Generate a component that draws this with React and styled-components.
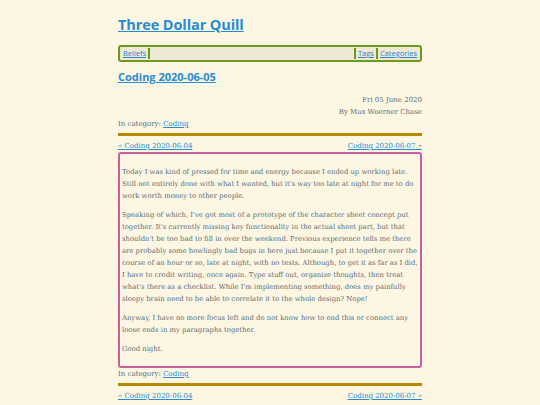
import React from 'react';
import styled, { createGlobalStyle } from 'styled-components';

const GlobalStyle = createGlobalStyle`
  html, body {
    margin: 0;
    padding: 0;
    background: #fdf6e3;
  }
  body {
    font-family: "DejaVu Serif", serif;
    color: #586e75;
  }
`;

const Page = styled.div`
  width: 304px;
  margin: 0 auto;
  padding-top: 14px;
`;

const SiteTitle = styled.h1`
  margin: 0;
  font-family: "Open Sans", "Noto Sans", sans-serif;
  font-weight: 700;
  font-size: 14.5px;
  line-height: 22px;
  letter-spacing: -0.1px;

  a {
    color: #268bd2;
  }
`;

const NavBar = styled.nav`
  margin-top: 9px;
  display: flex;
  align-items: center;
  height: 11px;
  padding: 1px 1px;
  background: #eee8d5;
  border: 2px solid #6b9a1e;
  border-radius: 3px;
  font-family: "Open Sans", "Noto Sans", sans-serif;
  font-size: 7.5px;
`;

const NavLink = styled.a`
  color: #268bd2;
  padding: 0 2px;
  line-height: 11px;
  border-left: ${(p) => (p.$left ? '2px solid #6b9a1e' : 'none')};
  border-right: ${(p) => (p.$right ? '2px solid #6b9a1e' : 'none')};
`;

const Spacer = styled.div`
  flex: 1;
`;

const PostTitle = styled.h2`
  margin: 6px 0 0;
  font-family: "Open Sans", "Noto Sans", sans-serif;
  font-weight: 700;
  font-size: 11px;
  line-height: 18px;

  a {
    color: #268bd2;
  }
`;

const Meta = styled.div`
  margin-top: 8px;
  text-align: right;
  font-size: 7px;
  line-height: 12px;
`;

const Category = styled.div`
  font-size: 7px;
  line-height: 12px;

  a {
    color: #268bd2;
  }
`;

const Rule = styled.hr`
  margin: 3px 0 0;
  border: none;
  height: 3px;
  background: #b58900;
`;

const PostNav = styled.div`
  display: flex;
  justify-content: space-between;
  margin-top: 4px;
  font-size: 7px;
  line-height: 12px;

  a {
    color: #268bd2;
  }
`;

const Body = styled.article`
  margin-top: 0;
  border: 2px solid #c9609b;
  border-radius: 3px;
  padding: 12px 2px 4px 2px;
  font-size: 6.85px;
  line-height: 12px;

  p {
    margin: 0 0 7px;
  }
`;

const posts = [
  "Today I was kind of pressed for time and energy because I ended up working late. Still not entirely done with what I wanted, but it's way too late at night for me to do work worth money to other people.",
  "Speaking of which, I've got most of a prototype of the character sheet concept put together. It's currently missing key functionality in the actual sheet part, but that shouldn't be too bad to fill in over the weekend. Previous experience tells me there are probably some howlingly bad bugs in here just because I put it together over the course of an hour or so, late at night, with no tests. Although, to get it as far as I did, I have to credit writing, once again. Type stuff out, organize thoughts, then treat what's there as a checklist. While I'm implementing something, does my painfully sleepy brain need to be able to correlate it to the whole design? Nope!",
  "Anyway, I have no more focus left and do not know how to end this or connect any loose ends in my paragraphs together.",
  "Good night.",
];

const Links = () => (
  <PostNav>
    <a href="#">« Coding 2020-06-04</a>
    <a href="#">Coding 2020-06-07 »</a>
  </PostNav>
);

export default function App() {
  return (
    <>
      <GlobalStyle />
      <Page>
        <SiteTitle>
          <a href="#">Three Dollar Quill</a>
        </SiteTitle>
        <NavBar>
          <NavLink href="#" $right>Beliefs</NavLink>
          <Spacer />
          <NavLink href="#" $left>Tags</NavLink>
          <NavLink href="#" $left>Categories</NavLink>
        </NavBar>
        <PostTitle>
          <a href="#">Coding 2020-06-05</a>
        </PostTitle>
        <Meta>
          <div>Fri 05 June 2020</div>
          <div>By Max Woerner Chase</div>
        </Meta>
        <Category>
          In category: <a href="#">Coding</a>
        </Category>
        <Rule />
        <Links />
        <Body>
          {posts.map((text, i) => (
            <p key={i}>{text}</p>
          ))}
        </Body>
        <Category>
          In category: <a href="#">Coding</a>
        </Category>
        <Rule />
        <Links />
      </Page>
    </>
  );
}
